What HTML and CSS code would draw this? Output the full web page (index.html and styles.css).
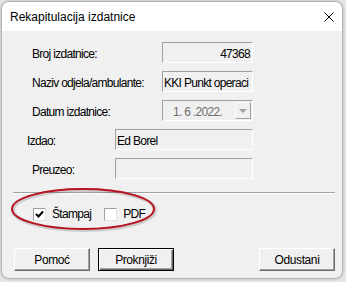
FILE: index.html
```html
<!DOCTYPE html>
<html lang="hr">
<head>
    <meta charset="UTF-8">
    <title>Rekapitulacija izdatnice</title>
    <link rel="stylesheet" href="styles.css">
</head>
<body>

<div class="window">
    <div class="titlebar">
        <span class="title">Rekapitulacija izdatnice</span>
        <svg class="close" width="10" height="10" viewBox="0 0 10 10">
            <path d="M0.5 0.5 L9.5 9.5 M9.5 0.5 L0.5 9.5" stroke="#000" stroke-width="1" fill="none"/>
        </svg>
    </div>

    <div class="content">
        <div class="form">
            <div class="row">
                <span class="label wide">Broj izdatnice:</span>
                <div class="field short right">47368</div>
            </div>
            <div class="row">
                <span class="label wide">Naziv odjela/ambulante:</span>
                <div class="field short">KKI Punkt operaci</div>
            </div>
            <div class="row">
                <span class="label wide">Datum izdatnice:</span>
                <div class="field short combo">
                    <span class="date">1. 6 .2022.</span>
                    <span class="drop"><span class="arrow"></span></span>
                </div>
            </div>
            <div class="row">
                <span class="label narrow izdao">Izdao:</span>
                <div class="field long">Ed Borel</div>
            </div>
            <div class="row">
                <span class="label narrow">Preuzeo:</span>
                <div class="field long"></div>
            </div>
        </div>

        <div class="separator"></div>

        <div class="checks">
            <label class="check"><span class="box checked">
                <svg width="9" height="9" viewBox="0 0 9 9"><path d="M1 4 L3.5 6.5 L8 1.5" stroke="#000" stroke-width="2" fill="none"/></svg>
            </span>Štampaj</label>
            <label class="check"><span class="box"></span>PDF</label>
            <svg class="mark" width="150" height="48" viewBox="0 0 150 48">
                <ellipse cx="74" cy="23" rx="71" ry="20" fill="none" stroke="rgba(0,0,0,0.15)" stroke-width="4"/>
                <ellipse cx="73" cy="22" rx="71" ry="20" fill="none" stroke="#b8131f" stroke-width="2"/>
            </svg>
        </div>

        <div class="buttons">
            <button class="btn">Pomoć</button>
            <button class="btn default">Proknjiži</button>
            <span class="spacer"></span>
            <button class="btn">Odustani</button>
        </div>
    </div>
</div>

</body>
</html>
```

FILE: styles.css
```css
body {
    margin: 0;
    width: 346px;
    height: 282px;
    background: #e6e6e6;
    font-family: "Liberation Sans", Arial, sans-serif;
    overflow: hidden;
}
.window {
    margin: 1px 0 0 1px;
    width: 342px;
    height: 278px;
    box-sizing: border-box;
    background: #f0f0f0;
    border: 1px solid #b4b4b4;
    border-radius: 8px;
    box-shadow: 0 0 3px rgba(0, 0, 0, 0.25);
    overflow: hidden;
}
.titlebar {
    height: 29px;
    background: #fff;
    display: flex;
    align-items: center;
    padding: 0 7px 0 8px;
}
.title {
    flex: 1;
    font-size: 12px;
    color: #000;
    padding-top: 1px;
}
.close {
    margin-right: 1px;
}
.content {
    position: relative;
    padding: 11px 0 0 0;
    font-size: 12px;
    letter-spacing: -0.7px;
    color: #000;
}
.form {
    display: flex;
    flex-direction: column;
    gap: 8px;
}
.row {
    display: flex;
    align-items: flex-start;
    height: 21px;
}
.label {
    padding-top: 4px;
    line-height: 16px;
    padding-left: 30px;
    white-space: nowrap;
}
.label.wide {
    width: 160px;
    box-sizing: border-box;
}
.label.narrow {
    width: 113px;
    box-sizing: border-box;
}
.label.izdao {
    padding-left: 25px;
}
.field {
    height: 21px;
    box-sizing: border-box;
    border: 1px solid;
    border-color: #a0a0a0 #fff #fff #a0a0a0;
    padding: 3px 2px 0 1px;
    line-height: 16px;
    white-space: nowrap;
    overflow: hidden;
}
.field.short {
    width: 91px;
}
.field.long {
    width: 138px;
}
.field.right {
    text-align: right;
}
.field.combo {
    display: flex;
    padding: 1px;
}
.date {
    flex: 1;
    color: #6d6d6d;
    padding: 2px 0 0 9px;
}
.drop {
    width: 16px;
    height: 17px;
    box-sizing: border-box;
    border: 1px solid;
    border-color: #fff #a0a0a0 #a0a0a0 #fff;
    display: flex;
    align-items: center;
    justify-content: center;
}
.arrow {
    width: 0;
    height: 0;
    border-left: 4px solid transparent;
    border-right: 4px solid transparent;
    border-top: 4px solid #a0a0a0;
}
.separator {
    margin: 13px 7px 0 11px;
    height: 1px;
    background: #a0a0a0;
    border-bottom: 1px solid #fff;
}
.checks {
    position: relative;
    display: flex;
    gap: 13px;
    padding: 11px 0 0 31px;
    height: 18px;
}
.check {
    display: flex;
    align-items: center;
    gap: 6px;
    line-height: 16px;
}
.box {
    width: 13px;
    height: 13px;
    box-sizing: border-box;
    background: #fff;
    border: 1px solid;
    border-color: #a0a0a0 #e3e3e3 #e3e3e3 #a0a0a0;
    display: flex;
    align-items: center;
    justify-content: center;
}
.mark {
    position: absolute;
    left: 8px;
    top: -7px;
}
.buttons {
    display: flex;
    gap: 8px;
    padding: 25px 7px 0 12px;
}
.spacer {
    flex: 1;
}
.btn {
    width: 76px;
    height: 23px;
    box-sizing: border-box;
    font-family: "Liberation Sans", Arial, sans-serif;
    font-size: 12px;
    letter-spacing: -0.4px;
    color: #000;
    background: #f0f0f0;
    border: 1px solid;
    border-color: #fff #696969 #696969 #fff;
    box-shadow: inset -1px -1px #a0a0a0;
    padding: 0;
}
.btn.default {
    border: 1px solid #000;
    box-shadow: inset 1px 1px #fff, inset -1px -1px #696969, inset -2px -2px #a0a0a0;
}
```
